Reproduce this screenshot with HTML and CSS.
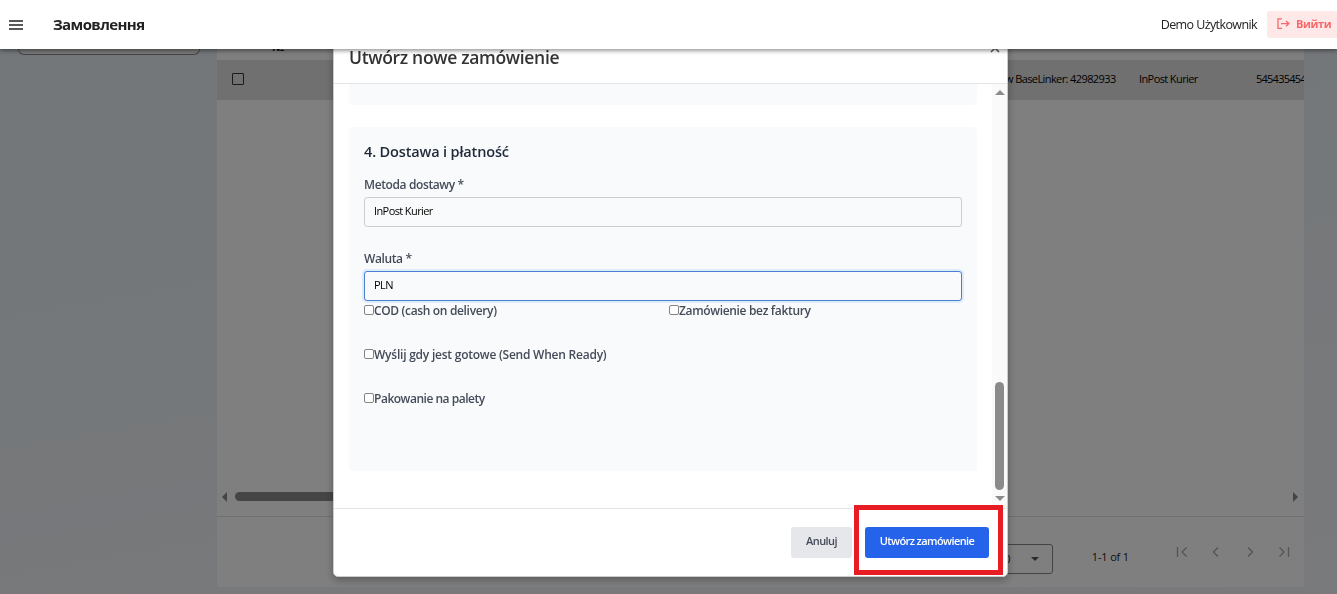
FILE: index.html
```html
<!DOCTYPE html>
<html lang="uk">

<head>
    <meta charset="UTF-8">
    <meta name="viewport" content="width=device-width, initial-scale=1.0">
    <title>Замовлення</title>
    <link rel="stylesheet" href="styles.css">
</head>

<body>

    <header class="topbar">
        <button type="button" class="menu-btn" aria-label="Menu">
            <svg width="14" height="10" viewBox="0 0 14 10"><path d="M0 1h14M0 5h14M0 9h14" stroke="#222" stroke-width="1.4" /></svg>
        </button>
        <h1 class="page-title">Замовлення</h1>
        <span class="user-name">Demo Użytkownik</span>
        <button type="button" class="logout-btn">
            <svg width="13" height="12" viewBox="0 0 13 12" fill="none" stroke="#f8686a" stroke-width="1.3"><path d="M5 .9H1v9.4h4M4 5.6h7.6M9 3l2.8 2.6L9 8.2" /></svg>
            <span>Вийти</span>
        </button>
    </header>

    <!-- Orders list under the dialog -->
    <main class="layout">
        <aside class="sidebar">
            <div class="search-box"></div>
        </aside>
        <section class="orders">
            <div class="orders-head"><span class="col-no">№</span></div>
            <div class="orders-row">
                <span class="row-check"></span>
                <span class="cell-source">w BaseLinker: 42982933</span>
                <span class="cell-delivery">InPost Kurier</span>
                <span class="cell-phone">545435454</span>
            </div>
            <div class="orders-empty"></div>
            <div class="h-scroll">
                <span class="arrow-left"></span>
                <span class="h-thumb"></span>
                <span class="arrow-right"></span>
            </div>
            <div class="pager">
                <div class="page-size"><span>100</span><span class="caret"></span></div>
                <span class="page-count">1-1 of 1</span>
                <svg class="page-icon" viewBox="0 0 12 12"><path d="M1.5 1v10M10.5 1.5L6 6l4.500 4.500" /></svg>
                <svg class="page-icon" viewBox="0 0 12 12"><path d="M8 1.500L3.500 6L8 10.500" /></svg>
                <svg class="page-icon" viewBox="0 0 12 12"><path d="M4 1.500L8.500 6L4 10.500" /></svg>
                <svg class="page-icon" viewBox="0 0 12 12"><path d="M10.500 1v10M1.500 1.500L6 6l-4.500 4.500" /></svg>
            </div>
        </section>
    </main>

    <div class="overlay">
        <div class="modal">
            <div class="modal-header">
                <h2>Utwórz nowe zamówienie</h2>
                <svg class="close" width="10" height="10" viewBox="0 0 10 10"><path d="M1 1l8 8M9 1L1 9" stroke="#555" stroke-width="1.5" /></svg>
            </div>
            <div class="modal-body">
                <form class="form">
                    <div class="section section-prev"></div>
                    <div class="section section-delivery">
                        <h3>4. Dostawa i płatność</h3>
                        <label class="label" for="delivery">Metoda dostawy *</label>
                        <input class="field" type="text" id="delivery" value="InPost Kurier">
                        <label class="label label-currency" for="currency">Waluta *</label>
                        <input class="field active" type="text" id="currency" value="PLN">
                        <div class="checks">
                            <label class="check"><input type="checkbox"><span>COD (cash on delivery)</span></label>
                            <label class="check"><input type="checkbox"><span>Zamówienie bez faktury</span></label>
                            <label class="check wide ready"><input type="checkbox"><span>Wyślij gdy jest gotowe (Send When Ready)</span></label>
                            <label class="check wide pallet"><input type="checkbox"><span>Pakowanie na palety</span></label>
                        </div>
                    </div>
                </form>
                <div class="v-scroll">
                    <span class="arrow-up"></span>
                    <span class="v-thumb"></span>
                    <span class="arrow-down"></span>
                </div>
            </div>
            <div class="modal-footer">
                <button type="button" class="btn btn-cancel">Anuluj</button>
                <div class="highlight">
                    <button type="button" class="btn btn-submit">Utwórz zamówienie</button>
                </div>
            </div>
        </div>
    </div>

</body>

</html>
```
FILE: styles.css
```css
* {
    box-sizing: border-box;
}

body {
    margin: 0;
    height: 594px;
    overflow: hidden;
    font-family: "Open Sans", "Noto Sans", sans-serif;
    color: #222;
    background: linear-gradient(170deg, #e6eff5 0%, #ebf0f5 50%, #f3f4f7 100%);
}

h1,
h2,
h3 {
    margin: 0;
}

button,
input {
    font-family: inherit;
}

/* Top bar */
.topbar {
    position: relative;
    z-index: 10;
    display: flex;
    align-items: center;
    height: 49px;
    padding-left: 9px;
    background: #fff;
    box-shadow: 0 2px 4px rgba(0, 0, 0, 0.4);
}

.menu-btn {
    display: flex;
    padding: 0;
    border: none;
    background: none;
}

.page-title {
    margin-left: 30px;
    padding-bottom: 2px;
    font-size: 15px;
    font-weight: 700;
    line-height: 20px;
    letter-spacing: -0.6px;
}

.user-name {
    margin-left: auto;
    font-size: 12.5px;
    letter-spacing: -0.6px;
}

.logout-btn {
    display: flex;
    align-items: center;
    gap: 6px;
    width: 70px;
    height: 27px;
    margin-left: 10px;
    padding: 0 0 2px 10px;
    border: none;
    border-radius: 3px 0 0 3px;
    background: #ffe8e8;
    color: #f8686a;
    font-size: 11px;
    font-weight: 700;
    letter-spacing: -0.4px;
    white-space: nowrap;
}

/* Orders list */
.layout {
    display: flex;
    height: 545px;
}

.sidebar {
    width: 217px;
    padding-left: 18px;
}

.search-box {
    width: 182px;
    height: 6px;
    border: 1px solid #8a8a90;
    border-top: none;
    border-radius: 0 0 12px 12px;
    background: #f2f3f5;
}

.orders {
    display: flex;
    flex-direction: column;
    width: 1087px;
    height: 538px;
    background: #fff;
    font-size: 11px;
}

.orders-head {
    height: 11px;
    padding-left: 55px;
    font-size: 12px;
    font-weight: 700;
    line-height: 0;
}

.col-no {
    display: block;
    margin-top: -2px;
}

.orders-row {
    display: flex;
    align-items: center;
    height: 40px;
    padding: 0 0 3px 15px;
    overflow: hidden;
    background: #e0e0e0;
    color: #000;
    white-space: nowrap;
}

.row-check {
    flex-shrink: 0;
    width: 12px;
    height: 12px;
    border: 1px solid #333;
    border-radius: 1px;
}

.cell-source {
    flex-shrink: 0;
    width: 134px;
    margin-left: 761px;
    letter-spacing: -0.6px;
}

.cell-delivery {
    flex-shrink: 0;
    width: 117px;
    letter-spacing: -0.6px;
}

.cell-phone {
    letter-spacing: -0.75px;
}

.orders-empty {
    flex: 1;
}

.h-scroll {
    display: flex;
    align-items: center;
    height: 15px;
    padding: 0 6px 0 5px;
}

.h-thumb {
    width: 500px;
    height: 9px;
    margin-left: 8px;
    border-radius: 5px;
    background: #8b8b8b;
}

.arrow-left {
    border: 5px solid transparent;
    border-right: 5px solid #8b8b8b;
    border-left: none;
}

.arrow-right {
    margin-left: auto;
    border: 5px solid transparent;
    border-left: 5px solid #8b8b8b;
    border-right: none;
}

.pager {
    display: flex;
    align-items: center;
    justify-content: flex-end;
    height: 71px;
    margin-top: 12px;
    padding: 0 14px 0 0;
    border-top: 1px solid #e0e0e0;
}

.page-size {
    display: flex;
    align-items: center;
    justify-content: space-between;
    width: 72px;
    height: 30px;
    margin: 13px 39px 0 0;
    padding: 0 13px 0 10px;
    border: 1px solid #888;
    border-radius: 3px;
}

.caret {
    border: 4px solid transparent;
    border-top-color: #555;
    border-bottom: none;
}

.page-count {
    margin: 9px 47px 0 0;
    font-size: 11px;
    letter-spacing: -0.15px;
}

.page-icon {
    width: 12px;
    height: 12px;
    margin-right: 22px;
    fill: none;
    stroke: #aaa;
    stroke-width: 1.4;
}

.page-icon:last-child {
    margin-right: 0;
}

/* Dialog */
.overlay {
    position: fixed;
    inset: 0;
    z-index: 5;
    padding-top: 28px;
    background: rgba(0, 0, 0, 0.5);
}

.modal {
    display: flex;
    flex-direction: column;
    width: 675px;
    height: 549px;
    margin-left: 333px;
    border: 1px solid #ccc;
    border-radius: 5px;
    background: #fff;
    box-shadow: 0 3px 8px rgba(0, 0, 0, 0.3);
}

.modal-header {
    display: flex;
    align-items: center;
    justify-content: space-between;
    height: 55px;
    padding: 0 7px 0 15px;
    border-bottom: 1px solid #e3e5e9;
}

.modal-header h2 {
    padding-top: 1px;
    font-size: 17.5px;
    font-weight: 600;
    line-height: 24px;
    letter-spacing: -0.32px;
    color: #333;
}

.close {
    margin-top: -16px;
}

.modal-body {
    display: flex;
    height: 424px;
}

.form {
    width: 658px;
    padding-left: 15px;
}

.section {
    width: 628px;
    background: #f9fafc;
}

.section-prev {
    height: 21px;
    border-radius: 0 0 4px 4px;
}

.section-delivery {
    height: 344px;
    margin-top: 22px;
    padding: 15px;
    border-radius: 4px;
}

.section h3 {
    height: 20px;
    font-size: 14.5px;
    font-weight: 600;
    line-height: 20px;
    letter-spacing: -0.15px;
    color: #1f2937;
}

.label {
    display: block;
    margin-top: 14px;
    font-size: 12px;
    font-weight: 600;
    line-height: 18px;
    letter-spacing: -0.38px;
    color: #444c5a;
}

.label-currency {
    margin-top: 23px;
}

.field {
    display: block;
    width: 598px;
    height: 30px;
    margin-top: 3px;
    padding: 0 9px 3px;
    border: 1px solid #ccced3;
    border-radius: 3px;
    outline: none;
    background: #f9fafc;
    color: #000;
    font-size: 11px;
    letter-spacing: -0.6px;
}

.field.active {
    border-color: #4a80cf;
    box-shadow: 0 0 0 2px #dfeafb;
}

.checks {
    display: grid;
    grid-template-columns: 305px 1fr;
    row-gap: 26px;
}

.check {
    display: flex;
    align-items: center;
    height: 18px;
    font-size: 12px;
    font-weight: 600;
    letter-spacing: -0.34px;
    color: #444c5a;
}

.check.wide {
    grid-column: 1 / 3;
}

.check.ready {
    letter-spacing: -0.23px;
}

.check.pallet {
    letter-spacing: -0.48px;
}

.check input {
    appearance: none;
    width: 10px;
    height: 10px;
    margin: 0 0 1px;
    border: 1px solid #858585;
    border-radius: 2px;
    background: #fff;
}

.v-scroll {
    display: flex;
    flex-direction: column;
    align-items: center;
    width: 15px;
    padding: 6px 0 7px;
    background: #fafafa;
}

.arrow-up {
    border: 5px solid transparent;
    border-bottom: 5px solid #8b8b8b;
    border-top: none;
}

.arrow-down {
    margin-top: 6px;
    border: 5px solid transparent;
    border-top: 5px solid #8b8b8b;
    border-bottom: none;
}

.v-thumb {
    width: 9px;
    height: 108px;
    margin-top: auto;
    border-radius: 5px;
    background: #8b8b8b;
}

.modal-footer {
    display: flex;
    align-items: center;
    justify-content: flex-end;
    height: 68px;
    padding-right: 4px;
    border-top: 1px solid #e3e5e9;
}

.btn {
    height: 31px;
    padding: 0 0 4px;
    border: none;
    border-radius: 3px;
    font-size: 11px;
    font-weight: 600;
    letter-spacing: -0.6px;
}

.btn-cancel {
    width: 61px;
    margin-right: 2px;
    background: #e5e7eb;
    color: #444c5a;
}

.btn-submit {
    width: 124px;
    background: #2563eb;
    color: #fff;
}

/* Red frame round the submit button */
.highlight {
    display: flex;
    align-items: center;
    width: 149px;
    height: 70px;
    margin-top: -5px;
    padding: 5px 0 0 6px;
    flex-shrink: 0;
    border: 5px solid #e71d25;
}
```
